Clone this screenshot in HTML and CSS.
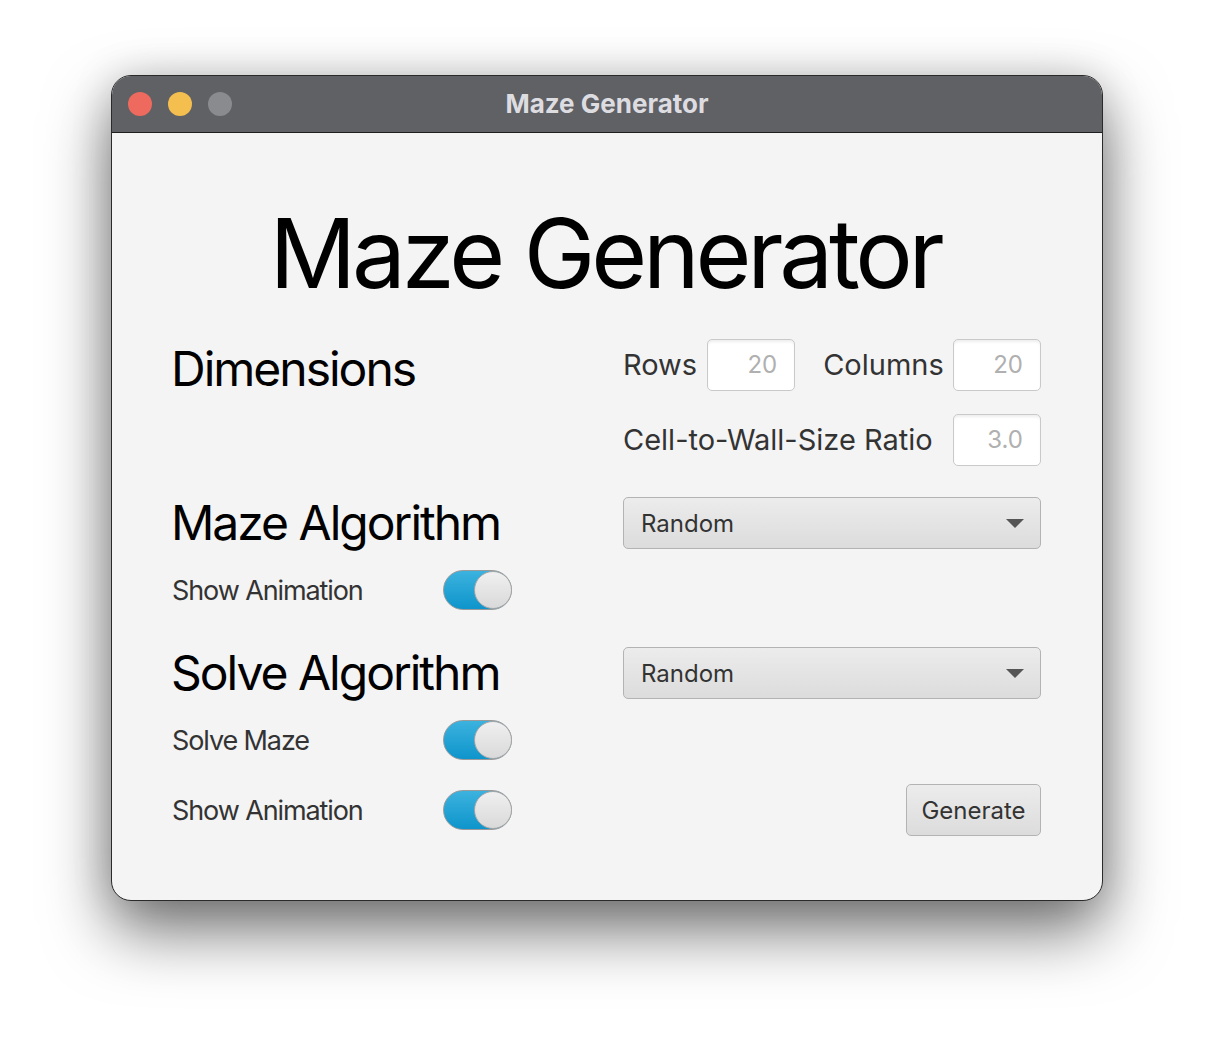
FILE: index.html
```html
<!DOCTYPE html>
<html>
<head>
<meta charset="utf-8">
<title>Maze Generator</title>
<link rel="stylesheet" href="styles.css">
</head>
<body>
<div class="window">
  <div class="titlebar">
    <div class="lights">
      <span class="light red"></span>
      <span class="light yellow"></span>
      <span class="light gray"></span>
    </div>
    <div class="wintitle">Maze Generator</div>
  </div>
  <div class="content">
    <h1 class="heading">Maze Generator</h1>

    <div class="row row-a">
      <div class="left"><h2 class="section">Dimensions</h2></div>
      <div class="right fields">
        <span class="label">Rows</span>
        <div class="field f-rows">20</div>
        <span class="label lbl-cols">Columns</span>
        <div class="field">20</div>
      </div>
    </div>

    <div class="row row-b">
      <div class="left"></div>
      <div class="right fields">
        <span class="label">Cell-to-Wall-Size Ratio</span>
        <div class="field">3.0</div>
      </div>
    </div>

    <div class="row row-c">
      <div class="left"><h2 class="section">Maze Algorithm</h2></div>
      <div class="right">
        <div class="combo"><span>Random</span><span class="arrow"></span></div>
      </div>
    </div>

    <div class="row row-d">
      <div class="left opt">
        <span class="optlabel">Show Animation</span>
        <span class="toggle"><span class="thumb"></span></span>
      </div>
      <div class="right"></div>
    </div>

    <div class="row row-e">
      <div class="left"><h2 class="section">Solve Algorithm</h2></div>
      <div class="right">
        <div class="combo"><span>Random</span><span class="arrow"></span></div>
      </div>
    </div>

    <div class="row row-f">
      <div class="left opt">
        <span class="optlabel">Solve Maze</span>
        <span class="toggle"><span class="thumb"></span></span>
      </div>
      <div class="right"></div>
    </div>

    <div class="row row-g">
      <div class="left opt">
        <span class="optlabel">Show Animation</span>
        <span class="toggle"><span class="thumb"></span></span>
      </div>
      <div class="right btnwrap">
        <button class="btn">Generate</button>
      </div>
    </div>
  </div>
</div>
</body>
</html>
```

FILE: styles.css
```css
* { box-sizing: border-box; }
html, body { margin: 0; padding: 0; }
body {
  width: 1214px;
  height: 1048px;
  background: #ffffff;
  font-family: Inter, "Noto Sans", "DejaVu Sans", sans-serif;
  overflow: hidden;
  padding: 75px 0 0 111px;
}
.window {
  width: 992px;
  height: 826px;
  border: 1px solid #2a2a2a;
  border-radius: 20px;
  overflow: hidden;
  background: #f4f4f4;
  box-shadow: 0 30px 65px rgba(0,0,0,0.55), 0 0 40px rgba(0,0,0,0.15);
  display: flex;
  flex-direction: column;
}
.titlebar {
  height: 57px;
  flex: 0 0 57px;
  background: #606165;
  border-bottom: 1px solid #1e1e1e;
  display: flex;
  align-items: center;
  position: relative;
}
.lights {
  display: flex;
  gap: 16px;
  padding-left: 16px;
}
.light {
  width: 24px;
  height: 24px;
  border-radius: 50%;
  display: block;
}
.red { background: #ee6a5e; }
.yellow { background: #f5bf4f; }
.gray { background: #8a8b8f; }
.wintitle {
  position: absolute;
  left: 0; right: 0;
  top: 0; bottom: 0;
  display: flex;
  align-items: center;
  justify-content: center;
  color: #dddde1;
  font-weight: 700;
  font-size: 26px;
  padding-bottom: 1px;
}
.content {
  flex: 1;
  padding: 0 61px 0 61px;
  display: flex;
  flex-direction: column;
}
.heading {
  margin: 72px 0 0 0;
  font-size: 96px;
  font-weight: 400;
  line-height: 96px;
  height: 96px;
  text-align: center;
  color: #000;
  letter-spacing: -4.2px;
  padding-right: 4px;
}
.row {
  display: flex;
  align-items: center;
}
.left {
  width: 450px;
  flex: 0 0 450px;
  display: flex;
  align-items: center;
}
.right {
  flex: 1;
  display: flex;
  align-items: center;
}
.row-a { margin-top: 38px; height: 52px; align-items: flex-start; }
.row-b { margin-top: 23px; height: 52px; }
.row-c { margin-top: 31px; height: 52px; }
.row-d { margin-top: 21px; height: 40px; }
.row-e { margin-top: 37px; height: 52px; }
.row-f { margin-top: 21px; height: 40px; }
.row-g { margin-top: 24px; height: 52px; }

.section {
  margin: 0 0 0 -2px;
  font-size: 48px;
  font-weight: 400;
  line-height: 52px;
  color: #000;
  letter-spacing: -2px;
}
.row-a .section { margin-top: 4px; }

.fields { justify-content: flex-start; }
.label {
  font-size: 29px;
  color: #333;
  letter-spacing: 0;
  line-height: 52px;
}
.field {
  width: 88px;
  height: 52px;
  margin-left: auto;
  background: #fff;
  border: 1.5px solid #c9c9c9;
  border-radius: 5px;
  box-shadow: inset 0 3px 3px -1px rgba(0,0,0,0.07);
  color: #b0b0b0;
  font-size: 24px;
  text-align: right;
  padding-right: 17px;
  line-height: 49px;
}
.f-rows { margin-left: 10px; margin-right: 28px; }

.combo {
  width: 100%;
  height: 52px;
  border: 1.5px solid #b3b3b3;
  border-radius: 5px;
  background: linear-gradient(#ececec, #dcdcdc);
  display: flex;
  align-items: center;
  justify-content: space-between;
  padding: 0 16px 0 17px;
  font-size: 24px;
  color: #333;
}
.arrow {
  width: 0; height: 0;
  border-left: 9px solid transparent;
  border-right: 9px solid transparent;
  border-top: 9px solid #555;
  margin-top: 1px;
}

.opt { justify-content: space-between; padding-right: 111px; }
.optlabel {
  font-size: 27px;
  color: #333;
  letter-spacing: -1.1px;
  margin-left: -1px;
}
.toggle {
  width: 69px;
  height: 40px;
  border-radius: 20px;
  border: 1.5px solid #9a9a9a;
  background: linear-gradient(#3cb2de, #0e95cb);
  display: flex;
  align-items: center;
  justify-content: flex-end;
}
.thumb {
  width: 38px;
  height: 38px;
  border-radius: 50%;
  background: linear-gradient(#f0f0f0, #d9d9d9);
  border: 1px solid #a8a8a8;
  display: block;
  margin-right: -0.5px;
}
.btnwrap { justify-content: flex-end; }
.btn {
  width: 135px;
  height: 52px;
  border: 1.5px solid #b3b3b3;
  border-radius: 5px;
  background: linear-gradient(#ececec, #dcdcdc);
  font-family: Inter, "Noto Sans", sans-serif;
  font-size: 24px;
  color: #333;
  padding: 0;
}
```
